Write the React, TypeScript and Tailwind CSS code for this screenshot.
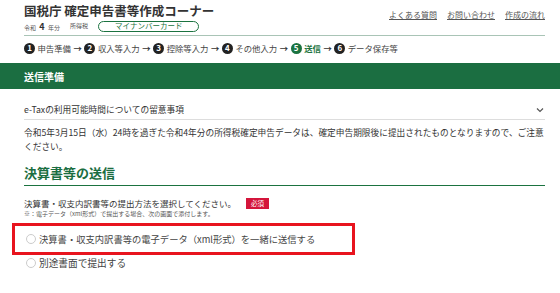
import React from 'react';

const steps = ['申告準備', '収入等入力', '控除等入力', 'その他入力', '送信', 'データ保存等'];

function StepNum({ n, active }: { n: number; active: boolean }) {
  return (
    <span
      className={`inline-flex h-[11px] w-[11px] items-center justify-center rounded-full text-[8px] font-bold leading-none text-white ${
        active ? 'bg-[#1b7340]' : 'bg-[#222]'
      }`}
    >
      {n}
    </span>
  );
}

export default function App() {
  return (
    <div
      className="h-[293px] w-[560px] overflow-hidden bg-white text-[#333]"
      style={{ fontFamily: '"Noto Sans CJK JP", "Noto Sans", sans-serif' }}
    >
      {/* header */}
      <div className="flex justify-between pl-6 pr-[15px] pt-[3px]">
        <div>
          <div className="text-[12.5px] font-bold leading-[15px] text-[#333]">国税庁 確定申告書等作成コーナー</div>
          <div className="mt-[2px] flex h-[12px] items-center gap-[10px] text-[6px] leading-none text-[#555]">
            <span>
              令和 <span className="mx-[2px] text-[9px] font-bold text-[#333]">4</span> 年分
            </span>
            <span>所得税</span>
            <span className="flex h-[11px] items-center rounded-full border border-[#1b7340] px-[16px] text-[7.5px] leading-none text-[#1b7340]">
              マイナンバーカード
            </span>
          </div>
        </div>
        <div className="mt-[8px] flex gap-[10px] text-[8px] leading-none text-[#555]">
          <span className="underline">よくある質問</span>
          <span className="underline">お問い合わせ</span>
          <span className="underline">作成の流れ</span>
        </div>
      </div>
      <div className="ml-6 mr-[15px] mt-[3px] border-t border-[#a9c4b6]" />

      {/* steps */}
      <div className="flex items-center gap-[2.5px] pl-6 pt-[5px] text-[8.4px] leading-[14px] text-[#444]">
        {steps.map((s, i) => (
          <React.Fragment key={s}>
            <StepNum n={i + 1} active={i === 4} />
            <span className={i === 4 ? 'font-bold text-[#1b7340]' : ''}>{s}</span>
            {i < steps.length - 1 && <span className="font-bold text-[#333]">→</span>}
          </React.Fragment>
        ))}
      </div>

      {/* band */}
      <div className="mt-[8px] flex h-[26px] items-center bg-[#1b6e41] pl-6 text-[10px] font-bold text-white">
        送信準備
      </div>

      {/* notice */}
      <div className="px-6 pr-[15px] pt-[15px]">
        <div className="flex items-center justify-between border-b border-[#ddd] pb-[3px] text-[8.7px] leading-[12px]">
          <span>e-Taxの利用可能時間についての留意事項</span>
          <svg width="8" height="6" viewBox="0 0 8 6" className="mr-[1px]">
            <path d="M1 1.5 L4 4.5 L7 1.5" fill="none" stroke="#555" strokeWidth="1.2" />
          </svg>
        </div>
        <p className="pt-[6px] text-[8.7px] leading-[14px] text-[#333]">
          令和5年3月15日（水）24時を過ぎた令和4年分の所得税確定申告データは、確定申告期限後に提出されたものとなりますので、ご注意ください。
        </p>
      </div>

      {/* section */}
      <div className="ml-6 mr-[15px] mt-[10px] border-b border-[#1b7340] pb-[3px] text-[13px] font-bold leading-[18px] text-[#1b6e41]">
        決算書等の送信
      </div>
      <div className="pl-6 pt-[11px]">
        <div className="flex items-center gap-[10px] text-[8.5px] leading-[12px]">
          <span>決算書・収支内訳書等の提出方法を選択してください。</span>
          <span className="bg-[#d4153b] px-[5px] py-[1.5px] text-[6.5px] leading-[8px] text-white">必須</span>
        </div>
        <div className="mt-[1px] text-[6px] leading-[8px] text-[#555]">※：電子データ（xml形式）で提出する場合、次の画面で添付します。</div>
      </div>

      <div className="ml-3 mt-[5px] w-[343px] border-[3px] border-[#e8141e] py-[6px] pl-[11px]">
        <label className="flex items-center gap-[3px] text-[9.3px] leading-[14px] text-[#444]">
          <span className="h-[10px] w-[10px] rounded-full border border-[#ccc] bg-white" />
          決算書・収支内訳書等の電子データ（xml形式）を一緒に送信する
        </label>
      </div>
      <label className="ml-[26px] mt-[1px] flex items-center gap-[3px] text-[9.7px] leading-[14px] text-[#444]">
        <span className="h-[10px] w-[10px] rounded-full border border-[#ccc] bg-white" />
        別途書面で提出する
      </label>
    </div>
  );
}
